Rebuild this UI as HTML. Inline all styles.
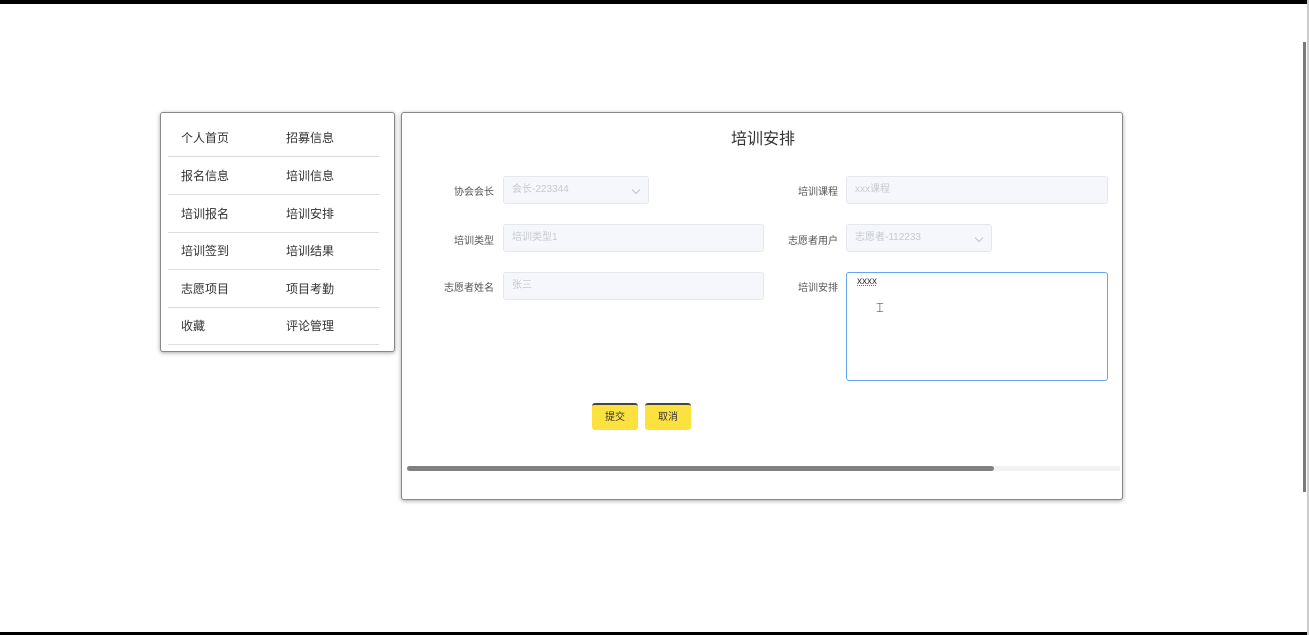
<!DOCTYPE html>
<html><head><meta charset="utf-8"><style>
*{box-sizing:border-box;margin:0;padding:0}
body{width:1309px;height:635px;background:#fff;position:relative;overflow:hidden;font-family:"Liberation Sans","Noto Sans CJK SC",sans-serif;}
.abs{position:absolute}
.topbar{left:0;top:0;width:1309px;height:4px;background:#000}
.botbar{left:0;top:632px;width:1309px;height:3px;background:#000}
.rs{left:1303px;top:42px;width:3px;height:450px;background:#7a7a7a}
.rl{left:1307px;top:0;width:2px;height:635px;background:#ccc}
.menu{left:160px;top:112px;width:235px;height:240px;border:1px solid #888;border-radius:3px;box-shadow:0 1px 4px rgba(0,0,0,.35);background:#fff}
.row{position:absolute;left:7px;width:211px;height:38px;border-bottom:1px solid #ddd;font-size:12px;color:#333}
.row span{position:absolute;top:10px}
.panel{left:401px;top:112px;width:722px;height:388px;border:1px solid #888;border-radius:3px;box-shadow:0 1px 4px rgba(0,0,0,.35);background:#fff}
.title{left:0;width:722px;top:12px;text-align:center;font-size:16px;color:#333}
.lab{font-size:10px;color:#555;text-align:right;width:100px}
.inp{background:#f5f7fa;border:1px solid #e4e7ed;border-radius:3px;font-size:10px;color:#c6c9cf;padding:0 8px;line-height:26px;height:28px}
.chev{position:absolute;right:9px;top:10px;width:6px;height:6px;border-right:1px solid #c0c4cc;border-bottom:1px solid #c0c4cc;transform:rotate(45deg)}
.btn{width:46px;height:27px;background:#fde23f;border-radius:3px;border-top:2px solid #444;font-size:10px;color:#333;text-align:center;line-height:25px}
</style></head><body>
<div class="abs topbar"></div><div class="abs botbar"></div>
<div class="abs rl"></div><div class="abs rs"></div>

<div class="abs menu">
 <div class="row" style="top:6px"><span style="left:13px">个人首页</span><span style="left:118px">招募信息</span></div>
 <div class="row" style="top:44px"><span style="left:13px">报名信息</span><span style="left:118px">培训信息</span></div>
 <div class="row" style="top:82px"><span style="left:13px">培训报名</span><span style="left:118px">培训安排</span></div>
 <div class="row" style="top:119px"><span style="left:13px">培训签到</span><span style="left:118px">培训结果</span></div>
 <div class="row" style="top:157px"><span style="left:13px">志愿项目</span><span style="left:118px">项目考勤</span></div>
 <div class="row" style="top:194px"><span style="left:13px">收藏</span><span style="left:118px">评论管理</span></div>
</div>

<div class="abs panel">
 <div class="abs title">培训安排</div>
 <div class="abs lab" style="left:-8px;top:70px">协会会长</div>
 <div class="abs inp" style="left:101px;top:63px;width:146px">会长-223344<i class="chev"></i></div>
 <div class="abs lab" style="left:-8px;top:119px">培训类型</div>
 <div class="abs inp" style="left:101px;top:111px;width:261px">培训类型1</div>
 <div class="abs lab" style="left:-8px;top:166px">志愿者姓名</div>
 <div class="abs inp" style="left:101px;top:159px;width:261px">张三</div>

 <div class="abs lab" style="left:336px;top:70px">培训课程</div>
 <div class="abs inp" style="left:444px;top:63px;width:262px">xxx课程</div>
 <div class="abs lab" style="left:336px;top:119px">志愿者用户</div>
 <div class="abs inp" style="left:444px;top:111px;width:146px">志愿者-112233<i class="chev"></i></div>
 <div class="abs lab" style="left:336px;top:166px">培训安排</div>
 <div class="abs" style="left:444px;top:159px;width:262px;height:109px;border:1px solid #66a6ee;border-radius:3px;font-size:10px;color:#333;padding:3px 10px;text-decoration:underline dotted #d33">xxxx</div>
 <div class="abs" style="left:474px;top:187px;font-size:13px;color:#333">⌶</div>

 <div class="abs btn" style="left:190px;top:290px">提交</div>
 <div class="abs btn" style="left:243px;top:290px">取消</div>

 <div class="abs" style="left:5px;top:353px;width:713px;height:5px;background:#f1f1f1"></div>
 <div class="abs" style="left:5px;top:353px;width:587px;height:5px;background:#808080;border-radius:3px"></div>
</div>
</body></html>
